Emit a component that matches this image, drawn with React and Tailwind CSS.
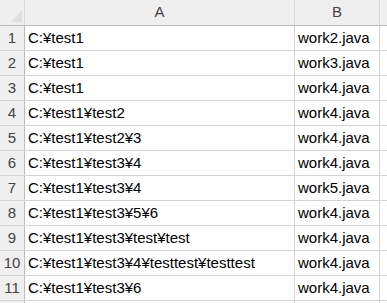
import React from 'react';

const rows = [
  ['C:¥test1', 'work2.java'],
  ['C:¥test1', 'work3.java'],
  ['C:¥test1', 'work4.java'],
  ['C:¥test1¥test2', 'work4.java'],
  ['C:¥test1¥test2¥3', 'work4.java'],
  ['C:¥test1¥test3¥4', 'work4.java'],
  ['C:¥test1¥test3¥4', 'work5.java'],
  ['C:¥test1¥test3¥5¥6', 'work4.java'],
  ['C:¥test1¥test3¥test¥test', 'work4.java'],
  ['C:¥test1¥test3¥4¥testtest¥testtest', 'work4.java'],
  ['C:¥test1¥test3¥6', 'work4.java'],
];

export default function App() {
  return (
    <div className="w-[387px] h-[303px] overflow-hidden bg-white text-[15px] text-black" style={{ fontFamily: '"Liberation Sans", "Noto Sans CJK JP", sans-serif' }}>
      {/* column header */}
      <div className="flex h-[26px] bg-[#efefef] border-b border-[#bdbdbd]">
        <div className="relative w-[25px] shrink-0 border-r border-[#d8d8d8]">
          <svg className="absolute left-[11px] top-[10px]" width="11" height="12" viewBox="0 0 11 12">
            <polygon points="11,0 11,12 0,12" fill="#dfdfdf" />
          </svg>
        </div>
        <div className="w-[270px] shrink-0 border-r border-[#d8d8d8] flex items-center justify-center text-[#444]">A</div>
        <div className="w-[85px] shrink-0 border-r border-[#d8d8d8] flex items-center justify-center text-[#444]">B</div>
        <div className="flex-1" />
      </div>

      {rows.map((r, i) => (
        <div key={i} className="flex h-[25px] border-b border-[#d4d4d4]">
          <div className="w-[25px] shrink-0 bg-[#efefef] border-r border-[#bdbdbd] flex items-center justify-center text-[#444]">
            {i + 1}
          </div>
          <div className="w-[270px] shrink-0 border-r border-[#d4d4d4] flex items-center pl-[3px] whitespace-nowrap">{r[0]}</div>
          <div className="w-[85px] shrink-0 border-r border-[#d4d4d4] flex items-center pl-[3px] whitespace-nowrap">{r[1]}</div>
          <div className="flex-1" />
        </div>
      ))}
      <div className="flex h-[25px]">
        <div className="w-[25px] shrink-0 bg-[#efefef] border-r border-[#bdbdbd]" />
        <div className="w-[270px] shrink-0 border-r border-[#d4d4d4]" />
        <div className="w-[85px] shrink-0 border-r border-[#d4d4d4]" />
      </div>
    </div>
  );
}
